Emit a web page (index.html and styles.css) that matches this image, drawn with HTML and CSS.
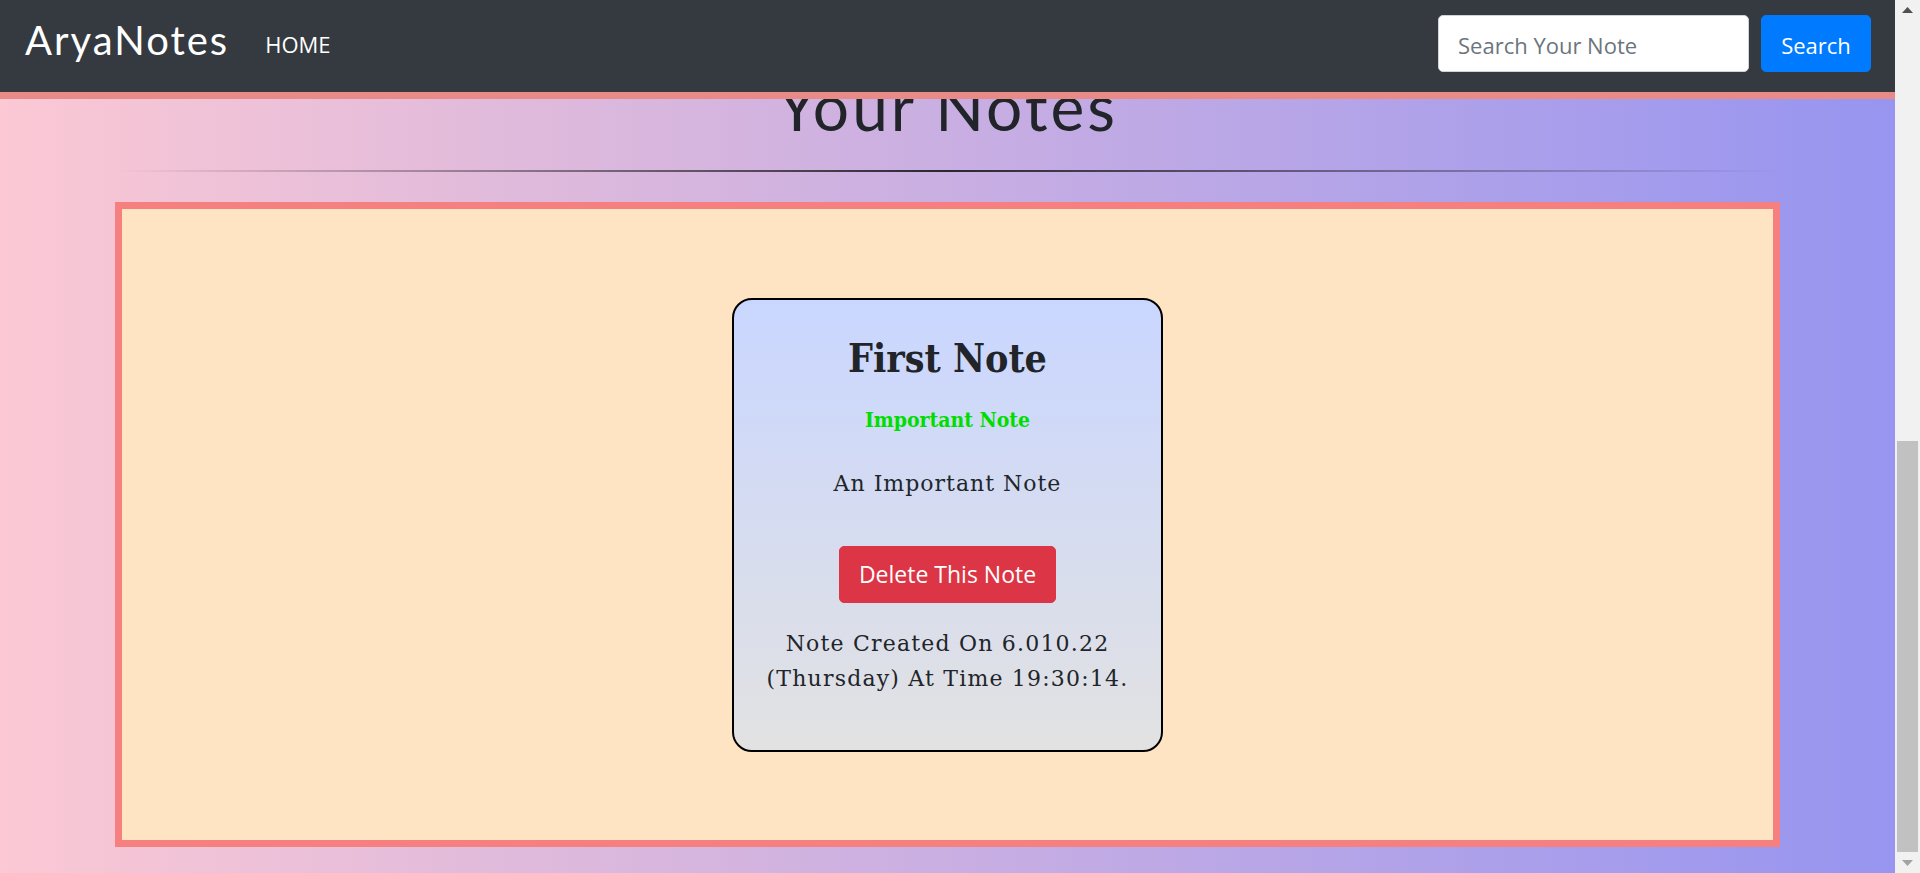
FILE: index.html
```html
<!DOCTYPE html>
<html lang="en">
<head>
<meta charset="utf-8">
<title>AryaNotes</title>
<link rel="stylesheet" href="styles.css">
</head>
<body>
<div class="screen">
  <div class="viewport">
    <nav class="navbar">
      <a class="brand" href="#">AryaNotes</a>
      <a class="nav-link" href="#">HOME</a>
      <form class="search-form">
        <input class="search-input" type="text" placeholder="Search Your Note">
        <button class="btn btn-search" type="button">Search</button>
      </form>
    </nav>
    <main class="content">
      <h1 class="page-title">Your Notes</h1>
      <hr class="divider">
      <section class="notes-box">
        <div class="note-card">
          <h2 class="note-title">First Note</h2>
          <p class="note-tag">Important Note</p>
          <p class="note-desc">An Important Note</p>
          <button class="btn btn-delete" type="button">Delete This Note</button>
          <p class="note-date">Note Created On 6.010.22 (Thursday) At Time 19:30:14.</p>
        </div>
      </section>
    </main>
  </div>
  <div class="scrollbar">
    <div class="sb-btn sb-up">
      <svg width="11" height="6" viewBox="0 0 11 6"><polygon points="0,6 5.5,0 11,6" fill="#505050"/></svg>
    </div>
    <div class="sb-track"><div class="sb-thumb"></div></div>
    <div class="sb-btn sb-down">
      <svg width="11" height="6" viewBox="0 0 11 6"><polygon points="0,0 11,0 5.5,6" fill="#a3a3a3"/></svg>
    </div>
  </div>
</div>
</body>
</html>
```
FILE: styles.css
```css
* { box-sizing: border-box; }
html, body { margin: 0; padding: 0; }
body {
  font-family: "Open Sans", "Noto Sans", sans-serif;
  color: #212529;
  overflow: hidden;
}
.screen {
  display: flex;
  width: 1920px;
  height: 873px;
}
.viewport {
  width: 1895px;
  height: 873px;
  display: flex;
  flex-direction: column;
  background: linear-gradient(to right, #fbc8d4 0%, #9795f0 100%);
}
.navbar {
  flex: none;
  height: 99px;
  background: #343a40;
  border-bottom: 7px solid #e88a87;
  display: flex;
  align-items: flex-start;
  padding: 15px 24px 0 25px;
}
.brand {
  font-family: "Lato", sans-serif;
  font-size: 40px;
  line-height: 48px;
  letter-spacing: 2px;
  color: #fff;
  text-decoration: none;
  margin-top: 1px;
}
.nav-link {
  font-size: 22px;
  line-height: 30px;
  color: #fff;
  text-decoration: none;
  margin-left: 36px;
  margin-top: 14px;
}
.search-form {
  margin-left: auto;
  display: flex;
  gap: 12px;
}
.search-input {
  width: 311px;
  height: 57px;
  border: 1px solid #ced4da;
  border-radius: 5px;
  padding: 2px 19px 0;
  font-family: "Open Sans", sans-serif;
  font-size: 22px;
  color: #495057;
  background: #fff;
  outline: none;
}
.search-input::placeholder { color: #6c757d; }
.btn {
  font-family: "Open Sans", sans-serif;
  font-size: 22px;
  line-height: 30px;
  color: #fff;
  border: 1px solid transparent;
  border-radius: 5px;
  display: inline-flex;
  align-items: center;
  justify-content: center;
  cursor: pointer;
}
.btn-search {
  width: 110px;
  height: 57px;
  padding: 2px 0 0;
  background: #007bff;
  border-color: #007bff;
}
.content {
  flex: 1;
  overflow: hidden;
}
.page-title {
  margin: -31px 0 0;
  text-align: center;
  font-family: "Lato", sans-serif;
  font-weight: 400;
  font-size: 64px;
  line-height: 77px;
  letter-spacing: 3px;
  color: #212529;
}
.divider {
  width: 1665px;
  height: 2px;
  margin: 25px auto 0;
  border: 0;
  background: linear-gradient(to right, rgba(0,0,0,0), rgba(0,0,0,0.78), rgba(0,0,0,0));
}
.notes-box {
  width: 1665px;
  height: 645px;
  margin: 30px auto 0;
  border: 7px solid #f68080;
  background: #ffe4c4;
  display: flex;
  align-items: center;
  justify-content: center;
}
.note-card {
  width: 431px;
  border: 2px solid #000;
  border-radius: 20px;
  background: linear-gradient(to bottom, #c9d6ff, #e2e2e2);
  padding: 34px 25px 53px;
  display: flex;
  flex-direction: column;
  align-items: center;
  text-align: center;
}
.note-title {
  margin: 0;
  font-family: "DejaVu Serif Condensed", "DejaVu Serif", serif;
  font-weight: 700;
  font-size: 39px;
  line-height: 48px;
  color: #212529;
}
.note-tag {
  margin: 24px 0 0;
  font-family: "DejaVu Serif Condensed", "DejaVu Serif", serif;
  font-weight: 700;
  font-size: 21px;
  line-height: 28px;
  color: #00dd00;
}
.note-desc {
  margin: 35px 0 0;
  font-family: "DejaVu Serif", serif;
  font-size: 22px;
  line-height: 30px;
  letter-spacing: 1px;
}
.btn-delete {
  margin-top: 47px;
  height: 57px;
  padding: 0 19px;
  background: #dc3545;
  border-color: #dc3545;
  font-size: 23px;
}
.note-date {
  margin: 23px 0 0;
  font-family: "DejaVu Serif", serif;
  font-size: 22px;
  line-height: 35.5px;
  letter-spacing: 1.2px;
}
.scrollbar {
  width: 25px;
  height: 873px;
  background: #f1f1f1;
  display: flex;
  flex-direction: column;
}
.sb-btn {
  display: flex;
  align-items: center;
  justify-content: center;
}
.sb-up { height: 19px; }
.sb-down { height: 21px; }
.sb-track {
  flex: 1;
  display: flex;
  flex-direction: column;
  justify-content: flex-end;
  padding: 0 2px;
}
.sb-thumb {
  height: 411px;
  background: #c1c1c1;
}
```
